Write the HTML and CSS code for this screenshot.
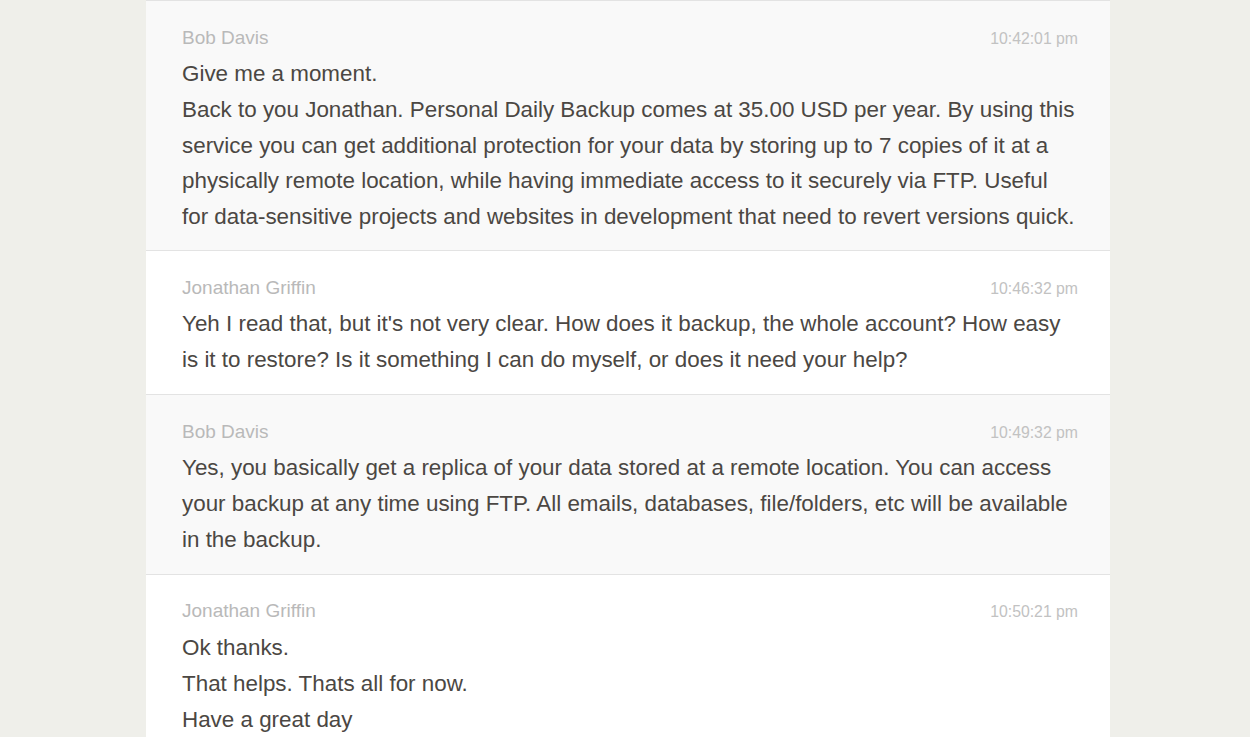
FILE: index.html
```html
<!DOCTYPE html>
<html lang="en">
<head>
<meta charset="utf-8">
<title>Chat transcript</title>
<link rel="stylesheet" href="styles.css">
</head>
<body>
<main class="transcript">
  <section class="msg msg-agent">
    <header class="meta"><span class="name">Bob Davis</span><span class="time">10:42:01 pm</span></header>
    <p class="line">Give me a moment.</p>
    <p class="line">Back to you Jonathan. Personal Daily Backup comes at 35.00 USD per year. By using this service you can get additional protection for your data by storing up to 7 copies of it at a physically remote location, while having immediate access to it securely via FTP. Useful for data-sensitive projects and websites in development that need to revert versions quick.</p>
  </section>
  <section class="msg msg-client">
    <header class="meta"><span class="name">Jonathan Griffin</span><span class="time">10:46:32 pm</span></header>
    <p class="line">Yeh I read that, but it's not very clear. How does it backup, the whole account? How easy is it to restore? Is it something I can do myself, or does it need your help?</p>
  </section>
  <section class="msg msg-agent">
    <header class="meta"><span class="name">Bob Davis</span><span class="time">10:49:32 pm</span></header>
    <p class="line">Yes, you basically get a replica of your data stored at a remote location. You can access your backup at any time using FTP. All emails, databases, file/folders, etc will be available in the backup.</p>
  </section>
  <section class="msg msg-client">
    <header class="meta"><span class="name">Jonathan Griffin</span><span class="time">10:50:21 pm</span></header>
    <p class="line">Ok thanks.</p>
    <p class="line">That helps. Thats all for now.</p>
    <p class="line">Have a great day</p>
  </section>
</main>
</body>
</html>
```

FILE: styles.css
```css
html, body {
  margin: 0;
  padding: 0;
}
body {
  background: #efefea;
  font-family: "Liberation Sans", Arial, sans-serif;
  height: 737px;
  overflow: hidden;
}
.transcript {
  width: 964px;
  margin-left: 146px;
  background: #ffffff;
}
.msg {
  border-top: 1px solid #e3e3e3;
  padding: 18.5px 32px 16.5px 36px;
}
.msg:first-child {
  padding-bottom: 15.3px;
}
.msg-agent {
  background: #f9f9f9;
}
.msg-client {
  background: #ffffff;
}
.meta {
  display: flex;
  justify-content: space-between;
  align-items: baseline;
  line-height: 35.7px;
}
.name {
  font-size: 19px;
  color: #b9b9b9;
}
.time {
  font-size: 15.8px;
  color: #c2c2c2;
}
.line {
  margin: 0;
  font-size: 22.4px;
  line-height: 35.7px;
  color: #4b4743;
}
```
